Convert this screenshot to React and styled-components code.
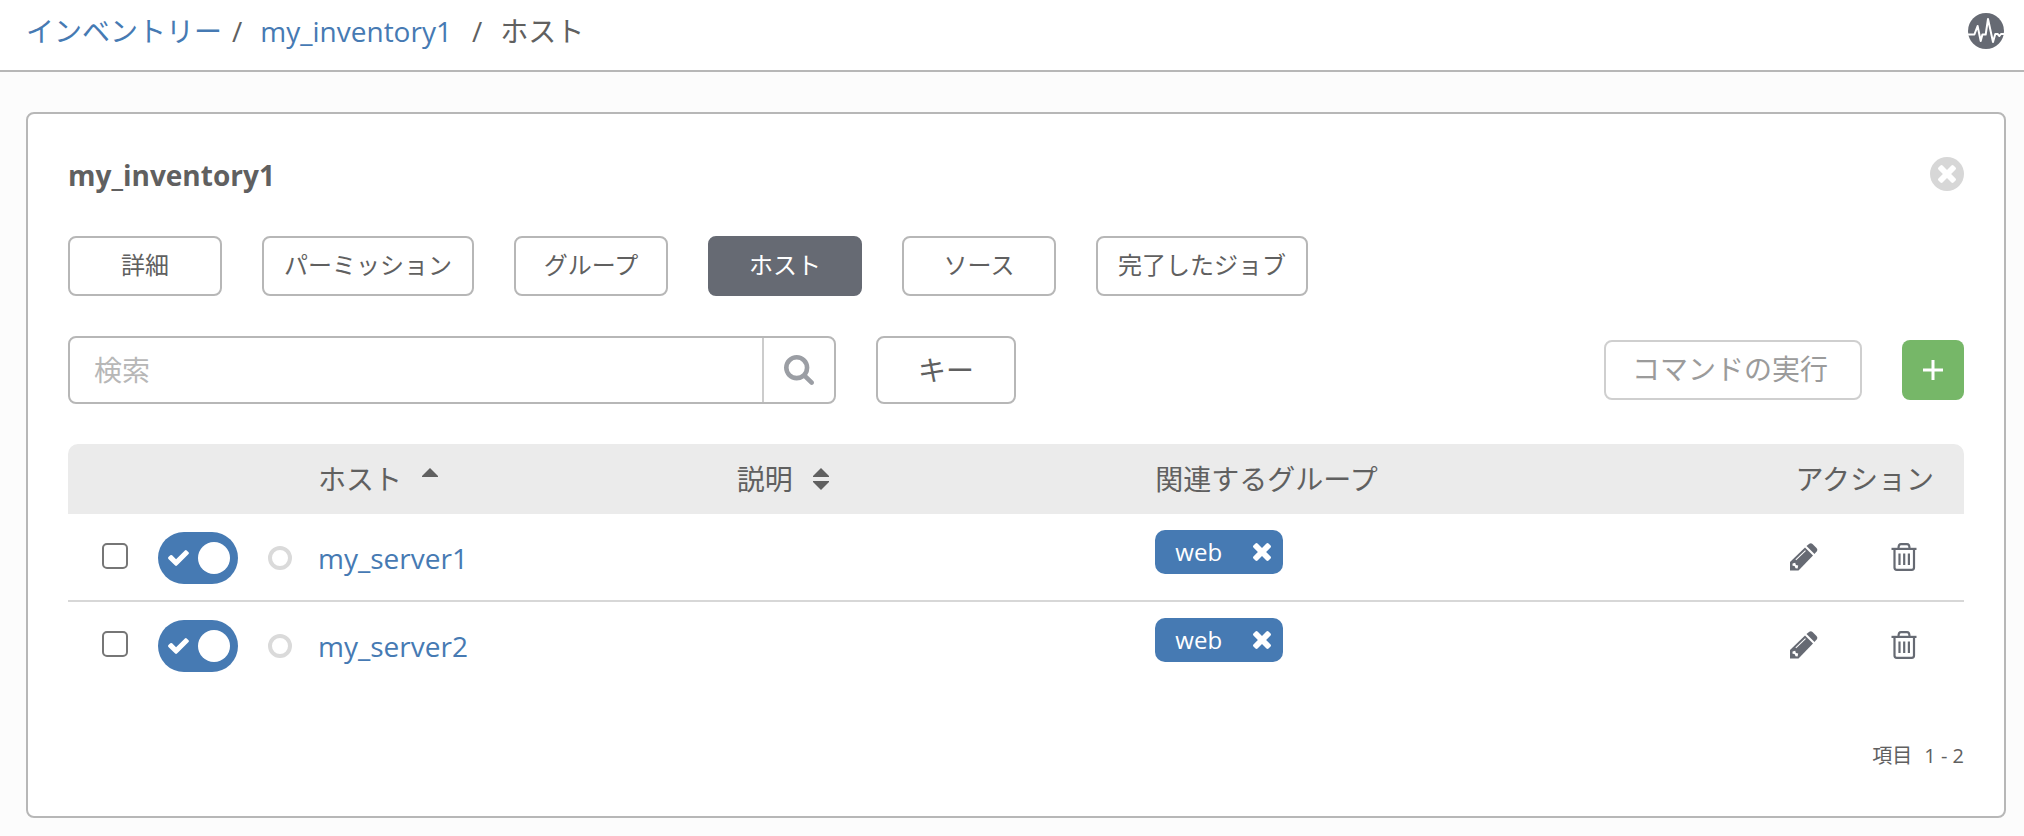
import React from "react";
import styled, { createGlobalStyle, css } from "styled-components";

const color = {
  text: "#606060",
  link: "#467ab3",
  border: "#b7b7b7",
  soft: "#d7d7d7",
  icon: "#666a73",
  green: "#76b768",
};

const GlobalStyle = createGlobalStyle`
  *, *::before, *::after { box-sizing: border-box; }
  body {
    margin: 0;
    background: #fcfcfc;
    color: ${color.text};
    font-family: "Open Sans", "Noto Sans CJK JP", sans-serif;
    font-size: 28px;
    line-height: 40px;
  }
  button, input { font: inherit; color: inherit; margin: 0; }
  button { cursor: pointer; }
`;

const TopBar = styled.header`
  display: flex;
  align-items: center;
  justify-content: space-between;
  height: 72px;
  padding: 0 20px 8px 26px;
  background: #fff;
  border-bottom: 2px solid ${color.border};
`;

const Crumbs = styled.ol`
  display: flex;
  margin: 0;
  padding: 0;
  list-style: none;
`;

const Crumb = styled.li`
  display: flex;
`;

const Slash = styled.span`
  margin: 0 18px 0 ${(p) => (p.$tight ? 10 : 20)}px;
`;

const Link = styled.a`
  color: ${color.link};
  text-decoration: none;
`;

const IconButton = styled.button`
  display: flex;
  align-items: center;
  justify-content: center;
  padding: 0;
  border: 0;
  background: none;
  color: ${color.icon};
`;

const CloseButton = styled(IconButton)`
  width: 34px;
  height: 34px;
  margin-bottom: 2px;
  border-radius: 50%;
  background: ${color.soft};
  color: #fff;
`;

const Panel = styled.main`
  margin: 40px 18px 18px 26px;
  padding: 40px;
  background: #fff;
  border: 2px solid ${color.border};
  border-radius: 8px;
`;

const PanelHeader = styled.div`
  display: flex;
  align-items: center;
  justify-content: space-between;
  height: 42px;
  margin-bottom: 40px;
`;

const Title = styled.h1`
  margin: 0;
  font-size: 28px;
  font-weight: 700;
`;

const Tabs = styled.nav`
  display: flex;
  gap: 40px;
  margin-bottom: 40px;
`;

const boxed = css`
  border: 2px solid ${color.border};
  border-radius: 8px;
  background: #fff;
`;

const Tab = styled.button`
  ${boxed}
  min-width: 154px;
  height: 60px;
  padding: 0 20px 2px;
  font-size: 24px;
  white-space: nowrap;
  ${(p) =>
    p.$active &&
    css`
      background: ${color.icon};
      border-color: ${color.icon};
      color: #fff;
    `}
`;

const Toolbar = styled.div`
  display: flex;
  align-items: center;
  gap: 40px;
  margin-bottom: 40px;
`;

const SearchForm = styled.form`
  ${boxed}
  display: flex;
  width: calc(50% - 180px);
  height: 68px;
  overflow: hidden;
`;

const SearchInput = styled.input`
  flex: 1;
  min-width: 0;
  padding: 0 24px;
  border: 0;
  outline: 0;
  background: none;
  &::placeholder {
    color: ${color.border};
    opacity: 1;
  }
`;

const SearchButton = styled(IconButton)`
  width: 72px;
  border-left: 2px solid #ccc;
  color: #9b9ea4;
`;

const KeyButton = styled.button`
  ${boxed}
  width: 140px;
  height: 68px;
`;

const Spacer = styled.div`
  flex: 1;
`;

const CommandButton = styled.button`
  ${boxed}
  height: 60px;
  padding: 0 32px 2px 26px;
  border-color: #cfcfcf;
  color: #9b9b9b;
  white-space: nowrap;
`;

const AddButton = styled(IconButton)`
  width: 62px;
  height: 60px;
  border-radius: 8px;
  background: ${color.green};
  color: #fff;
`;

const Table = styled.table`
  width: 100%;
  table-layout: fixed;
  border-collapse: separate;
  border-spacing: 0;
`;

const Col = styled.col`
  width: ${(p) => (p.$width ? `${p.$width}px` : "auto")};
`;

const Th = styled.th`
  height: 70px;
  padding: 0 ${(p) => (p.$end ? 30 : 0)}px 0 0;
  background: #ebebeb;
  font-weight: 400;
  text-align: ${(p) => (p.$end ? "right" : "left")};
  &:first-child { border-top-left-radius: 10px; }
  &:last-child { border-top-right-radius: 10px; }
`;

const SortButton = styled.button`
  display: flex;
  align-items: center;
  gap: 20px;
  padding: 0;
  border: 0;
  background: none;
`;

const Td = styled.td`
  height: 88px;
  padding: 2px 0 0;
  vertical-align: middle;
  border-bottom: 2px solid ${color.soft};
  tr:last-child > & { border-bottom-color: transparent; }
`;

const RowCheckbox = styled.input.attrs({ type: "checkbox" })`
  appearance: none;
  display: block;
  width: 26px;
  height: 26px;
  margin: 0 0 4px 34px;
  border: 2px solid #767676;
  border-radius: 5px;
  background: #fff;
`;

const SwitchTrack = styled.label`
  display: flex;
  align-items: center;
  justify-content: space-between;
  width: 80px;
  height: 52px;
  padding: 0 8px 0 10px;
  border-radius: 26px;
  background: ${color.link};
  color: #fff;
  cursor: pointer;
`;

const SwitchInput = styled.input.attrs({ type: "checkbox", role: "switch" })`
  appearance: none;
  width: 32px;
  height: 32px;
  border-radius: 50%;
  background: #fff;
  order: 1;
`;

const StatusRing = styled.span`
  display: block;
  width: 24px;
  height: 24px;
  border: 4px solid #dadada;
  border-radius: 50%;
`;

const Tag = styled.span`
  display: flex;
  align-items: center;
  justify-content: space-between;
  width: 128px;
  height: 44px;
  margin-bottom: 12px;
  padding: 0 12px 0 20px;
  border-radius: 10px;
  background: ${color.link};
  color: #fff;
  font-size: 24px;
`;

const TagRemove = styled(IconButton)`
  color: #fff;
`;

const RowActions = styled.div`
  display: flex;
  justify-content: flex-end;
  gap: 72px;
  margin-bottom: 2px;
  padding-right: 46px;
`;

const Pager = styled.div`
  display: flex;
  justify-content: flex-end;
  gap: 12px;
  margin: 54px 0 8px;
  font-size: 20px;
  line-height: 24px;
`;

const TimesIcon = () => (
  <svg width="18" height="18" viewBox="302 366 1188 1188" fill="currentColor" aria-hidden="true">
    <path d="M1490 1322q0 40-28 68l-136 136q-28 28-68 28t-68-28l-294-294-294 294q-28 28-68 28t-68-28l-136-136q-28-28-28-68t28-68l294-294-294-294q-28-28-28-68t28-68l136-136q28-28 68-28t68 28l294 294 294-294q28-28 68-28t68 28l136 136q28 28 28 68t-28 68l-294 294 294 294q28 28 28 68z" />
  </svg>
);

const CheckIcon = () => (
  <svg width="21" height="16" viewBox="121 334 1550 1188" fill="currentColor" aria-hidden="true">
    <path d="M1671 566q0 40-28 68l-724 724-136 136q-28 28-68 28t-68-28l-136-136-362-362q-28-28-28-68t28-68l136-136q28-28 68-28t68 28l294 295 656-657q28-28 68-28t68 28l136 136q28 28 28 68z" />
  </svg>
);

const SearchIcon = () => (
  <svg width="30" height="30" viewBox="64 128 1664 1664" fill="currentColor" aria-hidden="true">
    <path d="M1216 832q0-185-131.5-316.5t-316.5-131.5-316.5 131.5-131.5 316.5 131.5 316.5 316.5 131.5 316.5-131.5 131.5-316.5zm512 832q0 52-38 90t-90 38q-54 0-90-38l-343-342q-179 124-399 124-143 0-273.5-55.5t-225-150-150-225-55.5-273.5 55.5-273.5 150-225 225-150 273.5-55.5 273.5 55.5 225 150 150 225 55.5 273.5q0 220-124 399l343 343q37 37 37 90z" />
  </svg>
);

const ActivityIcon = () => (
  <svg width="36" height="36" viewBox="0 0 36 36" fill="none" aria-hidden="true">
    <circle cx="18" cy="18" r="18" fill="currentColor" />
    <path
      d="M0 21.5H6.4L9.6 13L12.7 28L14.4 21.5H17.7L20 6L25 29L27.3 21H29.6L31.4 23L33 21H36"
      stroke="#fff"
      strokeWidth="2"
      strokeLinejoin="round"
    />
  </svg>
);

const PlusIcon = () => (
  <svg width="20" height="20" viewBox="0 0 20 20" fill="currentColor" aria-hidden="true">
    <path d="M8.5 0h3v8.5H20v3h-8.5V20h-3v-8.5H0v-3h8.5z" />
  </svg>
);

const SortIcon = ({ both }) => (
  <svg width="16" height="22" viewBox="0 0 16 22" fill="currentColor" aria-hidden="true">
    <path d="M0 8L8 0l8 8v1H0z" />
    {both && <path d="M0 13h16v1l-8 8-8-8z" />}
  </svg>
);

const PencilIcon = () => (
  <svg width="28" height="28" viewBox="0 0 28 28" aria-hidden="true">
    <path d="M0 27.500V19L15 4.500L23 12.500L8.500 27.500Z" fill="currentColor" />
    <path d="M16.500 3L19.300 0.700Q21 -0.400 22.500 1L26.500 5Q28 6.700 26.800 8.300L24.500 11Z" fill="currentColor" />
    <path d="M5.800 16.800L15.500 7.600" stroke="#fff" strokeWidth="1.100" fill="none" />
    <path d="M2.600 20.500L5.200 19.800L5.900 22L8.200 22.600L7.600 25.400L5.500 25.200L4.800 23.200L2.400 22.400Z" fill="#fff" />
  </svg>
);

const TrashIcon = () => (
  <svg width="28" height="28" viewBox="0 0 28 28" fill="none" stroke="currentColor" aria-hidden="true">
    <path d="M1.500 5.900H26.500" strokeWidth="2.200" />
    <path d="M8.500 5.500Q8.500 1.200 11 1.200H17Q19.500 1.200 19.500 5.500" strokeWidth="2.200" />
    <path d="M4.500 6V24.500Q4.500 26.800 6.800 26.800H21.700Q24 26.800 24 24.500V6" strokeWidth="2.200" />
    <path d="M9.500 10.500V22M14.200 10.500V22M18.900 10.500V22" strokeWidth="2.200" />
  </svg>
);

const tabs = ["詳細", "パーミッション", "グループ", "ホスト", "ソース", "完了したジョブ"];
const hosts = [
  { name: "my_server1", group: "web" },
  { name: "my_server2", group: "web" },
];

function HostRow({ name, group }) {
  return (
    <tr>
      <Td>
        <RowCheckbox aria-label={`${name} を選択`} />
      </Td>
      <Td>
        <SwitchTrack>
          <SwitchInput defaultChecked aria-label={`${name} を有効化`} />
          <CheckIcon />
        </SwitchTrack>
      </Td>
      <Td>
        <StatusRing />
      </Td>
      <Td>
        <Link href="#host">{name}</Link>
      </Td>
      <Td />
      <Td>
        <Tag>
          {group}
          <TagRemove type="button" aria-label="グループを解除">
            <TimesIcon />
          </TagRemove>
        </Tag>
      </Td>
      <Td>
        <RowActions>
          <IconButton type="button" aria-label="編集">
            <PencilIcon />
          </IconButton>
          <IconButton type="button" aria-label="削除">
            <TrashIcon />
          </IconButton>
        </RowActions>
      </Td>
    </tr>
  );
}

export default function App() {
  return (
    <>
      <GlobalStyle />
      <TopBar>
        <nav aria-label="パンくず">
          <Crumbs>
            <Crumb>
              <Link href="#inventories">インベントリー</Link>
            </Crumb>
            <Crumb>
              <Slash $tight>/</Slash>
              <Link href="#inventory">my_inventory1</Link>
            </Crumb>
            <Crumb>
              <Slash>/</Slash>
              ホスト
            </Crumb>
          </Crumbs>
        </nav>
        <IconButton type="button" aria-label="アクティビティー">
          <ActivityIcon />
        </IconButton>
      </TopBar>
      <Panel>
        <PanelHeader>
          <Title>my_inventory1</Title>
          <CloseButton type="button" aria-label="閉じる">
            <TimesIcon />
          </CloseButton>
        </PanelHeader>
        <Tabs>
          {tabs.map((label) => (
            <Tab key={label} type="button" $active={label === "ホスト"}>
              {label}
            </Tab>
          ))}
        </Tabs>
        <Toolbar>
          <SearchForm role="search">
            <SearchInput type="text" placeholder="検索" aria-label="検索" />
            <SearchButton type="submit" aria-label="検索を実行">
              <SearchIcon />
            </SearchButton>
          </SearchForm>
          <KeyButton type="button">キー</KeyButton>
          <Spacer />
          <CommandButton type="button">コマンドの実行</CommandButton>
          <AddButton type="button" aria-label="追加">
            <PlusIcon />
          </AddButton>
        </Toolbar>
        <Table>
          <colgroup>
            <Col $width={90} />
            <Col $width={110} />
            <Col $width={50} />
            <Col />
            <Col />
            <Col />
            <Col $width={390} />
          </colgroup>
          <thead>
            <tr>
              <Th colSpan={3} />
              <Th>
                <SortButton type="button">
                  ホスト
                  <SortIcon />
                </SortButton>
              </Th>
              <Th>
                <SortButton type="button">
                  説明
                  <SortIcon both />
                </SortButton>
              </Th>
              <Th>関連するグループ</Th>
              <Th $end>アクション</Th>
            </tr>
          </thead>
          <tbody>
            {hosts.map((host) => (
              <HostRow key={host.name} {...host} />
            ))}
          </tbody>
        </Table>
        <Pager>
          <span>項目</span>
          <span>1 - 2</span>
        </Pager>
      </Panel>
    </>
  );
}
